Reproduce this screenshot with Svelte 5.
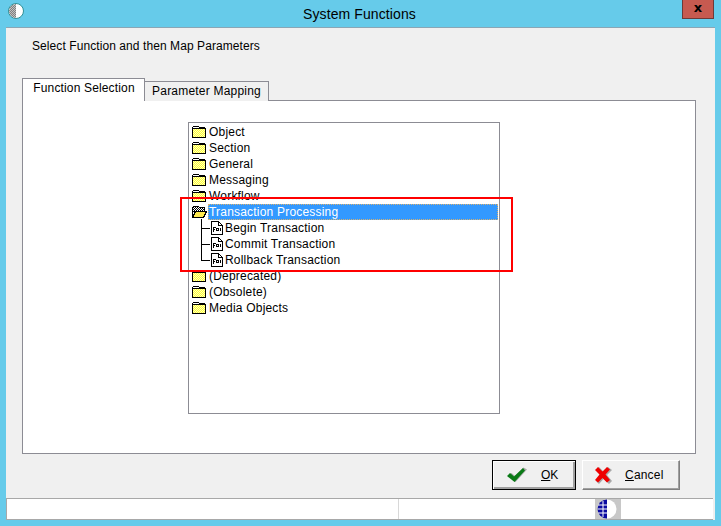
<script>
	const folders1 = ['Object', 'Section', 'General', 'Messaging', 'Workflow'];
	const children = ['Begin Transaction', 'Commit Transaction', 'Rollback Transaction'];
	const folders2 = ['(Deprecated)', '(Obsolete)', 'Media Objects'];
</script>

{#snippet folder()}
	<svg class="icon" width="16" height="14" viewBox="0 0 16 14" shape-rendering="crispEdges">
		<path d="M1.500 12.500V2.500L2.500 1.500H7.500L8.500 2.500H13.500L14.500 3.500V12.500Z" fill="url(#dither)" stroke="#000" />
		<path d="M2 3.500H14" stroke="#000" fill="none" />
		<path d="M2 2.500H8" stroke="#fff" fill="none" />
	</svg>
{/snippet}

{#snippet doc()}
	<svg class="icon" width="12" height="14" viewBox="0 0 12 14" shape-rendering="crispEdges">
		<path d="M.5 .5H7.500L11.500 4.500V13.500H.5Z" fill="#fff" stroke="#000" />
		<path d="M7.500 1V4.500H11M2.500 6V11M2.500 6.500H4.500M2.500 8.500H4M5.500 7.500H7.500V9.500H5.500ZM9.500 7V10" stroke="#000" fill="none" />
	</svg>
{/snippet}

<div class="window">
	<svg class="defs" width="0" height="0">
		<defs>
			<pattern id="dither" width="2" height="2" patternUnits="userSpaceOnUse">
				<rect width="2" height="2" fill="#ffff33" />
				<rect width="1" height="1" fill="#ffffc0" />
				<rect x="1" y="1" width="1" height="1" fill="#ffffc0" />
			</pattern>
			<pattern id="hatch" width="2" height="2" patternUnits="userSpaceOnUse">
				<rect width="2" height="2" fill="#ffffff" />
				<rect width="1" height="1" fill="#000" />
				<rect x="1" y="1" width="1" height="1" fill="#000" />
			</pattern>
			<pattern id="grey" width="2" height="2" patternUnits="userSpaceOnUse">
				<rect width="2" height="2" fill="#c0c0c0" />
				<rect width="1" height="1" fill="#808080" />
				<rect x="1" y="1" width="1" height="1" fill="#808080" />
			</pattern>
		</defs>
	</svg>

	<header class="titlebar">
		<svg class="globe" width="16" height="16" viewBox="0 0 16 16">
			<circle cx="8" cy="8" r="7.500" fill="#fff" stroke="#2f8f96" />
			<path d="M8 1A7 7 0 0 0 8 15Z" fill="url(#grey)" />
		</svg>
		<span class="title">System Functions</span>
		<button class="close">x</button>
	</header>

	<div class="client">
		<div class="body">
			<p class="hint">Select Function and then Map Parameters</p>

			<div class="tabs">
				<div class="tab active">Function Selection</div>
				<div class="tab">Parameter Mapping</div>
			</div>

			<div class="panel">
				<div class="tree">
					{#each folders1 as name}
						<div class="row">{@render folder()}<span class="label">{name}</span></div>
					{/each}
					<div class="row">
						<svg class="icon" width="16" height="14" viewBox="0 0 16 14" shape-rendering="crispEdges">
							<path d="M1.500 12.500V2.500L2.500 1.500H7.500L8.500 2.500H13.500V6.500H1.500Z" fill="url(#hatch)" stroke="#000" />
							<path d="M1.500 12.500L4.500 6.500H15.500L12.500 12.500Z" fill="#ffe94d" stroke="#000" />
						</svg>
						<span class="label selected">Transaction Processing</span>
					</div>
					{#each children as name, i}
						<div class="row child">
							<span class="branch" class:last={i === children.length - 1}></span>
							{@render doc()}<span class="label">{name}</span>
						</div>
					{/each}
					{#each folders2 as name}
						<div class="row">{@render folder()}<span class="label">{name}</span></div>
					{/each}
				</div>
				<div class="highlight"></div>
			</div>

			<div class="actions">
				<button class="btn ok">
					<svg width="22" height="18" viewBox="0 0 22 18">
						<path d="M2.500 9.500L5.500 7L9 10L17.500 1.500L21 3.500L9.500 16Z" fill="#a8a8a8" />
						<path d="M1 10L4 7L8 10.500L17 2L19 4.500L8.500 16Z" fill="#0a7a16" />
					</svg>
					<span><u>O</u>K</span>
				</button>
				<button class="btn cancel">
					<svg width="18" height="18" viewBox="0 0 18 18">
						<path d="M3 3L5 1L9.500 5.500L14 1L18 4L13 9L18 15L15 18L9.500 13L5 18L2 15L6 9Z" fill="#a8a8a8" />
						<path d="M1 4L4 1L8.500 5.500L13 1L16 3.500L11.500 8.500L16 14L13 16.500L8.500 12L4 16.500L1 14L5.500 8.500Z" fill="#ee0000" />
					</svg>
					<span><u>C</u>ancel</span>
				</button>
			</div>
		</div>

		<footer class="status">
			<div class="cell wide"></div>
			<div class="cell rest">
				<span class="busy">
					<svg width="22" height="20" viewBox="0 0 22 20">
						<path d="M11 .5A9.500 9.500 0 0 1 11 19.500Z" fill="#fff" />
						<path d="M11 .5A9.500 9.500 0 0 0 11 19.500Z" fill="#0a0aa0" />
						<path d="M2 6H11M1.500 10H11M2 14H11M7 2V18" stroke="#fff" stroke-width="1" />
					</svg>
				</span>
			</div>
		</footer>
	</div>
</div>

<style>
	:global(body) {
		margin: 0;
	}

	.window {
		width: 721px;
		height: 526px;
		background: #66cbea;
		display: flex;
		flex-direction: column;
		font-family: 'Liberation Sans', Arial, sans-serif;
		font-size: 12px;
		color: #000;
		box-sizing: border-box;
		overflow: hidden;
	}

	.defs {
		position: absolute;
	}

	.titlebar {
		height: 27px;
		flex: none;
		display: flex;
		align-items: center;
		justify-content: center;
		position: relative;
	}

	.globe {
		position: absolute;
		left: 8px;
		top: 3px;
	}

	.title {
		font-size: 14px;
		letter-spacing: .1px;
		margin-right: 2px;
	}

	.close {
		position: absolute;
		right: 7px;
		top: 0;
		width: 32px;
		height: 19px;
		padding: 0 0 3px;
		background: #c75a50;
		border: 1px solid #6e3a38;
		border-top: none;
		font-family: 'DejaVu Sans', sans-serif;
		font-weight: 700;
		font-size: 13px;
		line-height: 1;
		color: #000;
	}

	.client {
		flex: 1;
		margin: 0 6px 6px;
		background: #f0f0f0;
		border-top: 1px solid #8aa6b5;
		display: flex;
		flex-direction: column;
		min-height: 0;
	}

	.body {
		flex: 1;
		padding: 0 19px 0 16px;
		display: flex;
		flex-direction: column;
	}

	.hint {
		margin: 11px 0 0 10px;
		line-height: 15px;
		height: 39px;
		letter-spacing: .08px;
	}

	.tabs {
		display: flex;
		align-items: flex-end;
		position: relative;
		z-index: 1;
		margin-bottom: -1px;
	}

	.tab {
		width: 123px;
		height: 20px;
		line-height: 20px;
		text-align: center;
		border: 1px solid #8c8c94;
		border-bottom: none;
		background: #f0f0f0;
		letter-spacing: .2px;
		box-sizing: border-box;
	}

	.tab.active {
		height: 23px;
		line-height: 19px;
		background: #fff;
		letter-spacing: .15px;
		padding-left: 1px;
		position: relative;
	}

	.tab + .tab {
		width: 124px;
		border-left: none;
		line-height: 19px;
	}

	.panel {
		height: 354px;
		background: #fff;
		border: 1px solid #8c8c94;
		box-sizing: border-box;
		padding: 21px 0 0 165px;
		position: relative;
	}

	.tree {
		width: 312px;
		height: 292px;
		box-sizing: border-box;
		border: 1px solid #8c8c94;
		padding: 1px 1px 0 2px;
	}

	.row {
		height: 16px;
		display: flex;
		align-items: center;
		gap: 1px;
		white-space: nowrap;
		letter-spacing: .2px;
	}

	.child {
		padding-left: 9px;
		position: relative;
	}

	.branch {
		position: relative;
		width: 10px;
		height: 16px;
		flex: none;
	}

	.branch::before {
		content: '';
		position: absolute;
		left: 1px;
		top: -1px;
		height: 17px;
		border-left: 1px solid #000;
	}

	.branch.last::before {
		height: 9px;
	}

	.branch::after {
		content: '';
		position: absolute;
		left: 1px;
		top: 8px;
		width: 9px;
		border-top: 1px solid #000;
	}

	.icon {
		flex: none;
	}

	.label {
		padding: 0 1px;
		line-height: 16px;
	}

	.selected {
		flex: 1;
		background: #3399ff;
		color: #fff;
		outline: 1px dotted #d8b070;
		outline-offset: -1px;
	}

	.highlight {
		position: absolute;
		left: 157px;
		top: 96px;
		width: 333px;
		height: 75px;
		box-sizing: border-box;
		border: 2px solid #ff0000;
	}

	.actions {
		display: flex;
		justify-content: flex-end;
		gap: 6px;
		margin-top: 6px;
		padding-right: 16px;
	}

	.btn {
		height: 30px;
		box-sizing: border-box;
		background: #f0f0f0;
		font: inherit;
		font-size: 12px;
		color: #000;
		display: flex;
		align-items: center;
		padding: 0;
		border: 1px solid;
		border-color: #fff #808080 #808080 #fff;
		box-shadow: inset -1px -1px 0 #a0a0a0;
	}

	.ok {
		width: 84px;
		border: 1px solid #000;
		box-shadow: inset 1px 1px 0 #fff, inset -2px -2px 0 #a0a0a0;
		padding-left: 13px;
		gap: 13px;
	}

	.cancel {
		width: 98px;
		padding-left: 11px;
		gap: 13px;
		letter-spacing: .2px;
	}

	.status {
		height: 22px;
		flex: none;
		margin-top: 8px;
		margin-right: 2px;
		display: flex;
		background: #fff;
		border-top: 1px solid #a8a8a8;
		border-left: 1px solid #a8a8a8;
		border-bottom: 1px solid #a8a8a8;
		box-sizing: border-box;
	}

	.cell.wide {
		width: 391px;
		border-right: 1px solid #d8d8d8;
	}

	.rest {
		flex: 1;
		padding-left: 196px;
	}

	.busy {
		display: flex;
		width: 26px;
		height: 20px;
		background: #c8c8c8;
		padding-left: 1px;
		box-sizing: border-box;
	}
</style>
